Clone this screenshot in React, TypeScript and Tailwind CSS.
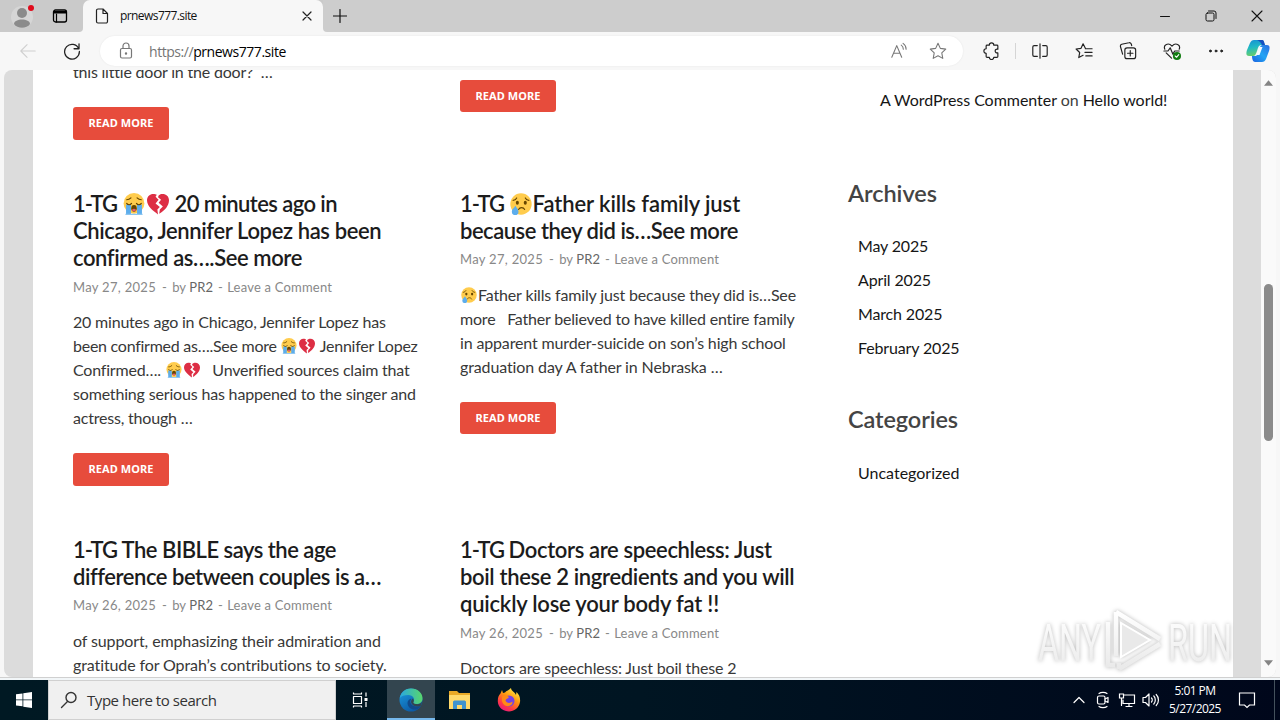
import type { ReactNode } from "react";

const Crying = ({ className = "" }: { className?: string }) => (
  <svg viewBox="0 0 36 36" className={"inline-block " + className}>
    <circle cx="18" cy="17" r="17" fill="#ffcc4d" />
    <path d="M5 19h8v16H5zM23 19h8v16h-8z" fill="#5dadec" />
    <path d="M4 34h28v2H4z" fill="#8cc5f0" />
    <path d="M6 17c2 3 6 3 8 0M22 17c2 3 6 3 8 0M6 11c3 0 5-1 7-3M30 11c-3 0-5-1-7-3" fill="none" stroke="#664500" strokeWidth="1.9" strokeLinecap="round" />
    <ellipse cx="18" cy="25" rx="4.5" ry="5.5" fill="#664500" />
    <path d="M14.5 28c2-3 5-3 7 0-1 3-6 3-7 0z" fill="#e75a70" />
  </svg>
);

const Broken = ({ className = "" }: { className?: string }) => (
  <svg viewBox="0 0 36 36" className={"inline-block " + className}>
    <path d="M13.6 2C7 0 0 4 0 12c0 9 9 17 18 23l-1-8 4-4-7-6 5-6-5-5 2-3c-.7-.5-1.500-.8-2.400-1z" fill="#dd2e44" />
    <path d="M36 12c0-8-7-12-14-10l-3 2-1 3 5 4-4 5 7 6-5 5-1 7c9-5 16-13 16-22z" fill="#dd2e44" />
  </svg>
);

const Tear = ({ className = "" }: { className?: string }) => (
  <svg viewBox="0 0 36 36" className={"inline-block " + className}>
    <circle cx="18" cy="18" r="17.500" fill="#ffcc4d" />
    <ellipse cx="12" cy="16" rx="2.500" ry="3.300" fill="#664500" />
    <ellipse cx="25" cy="16" rx="2.500" ry="3.300" fill="#664500" />
    <path d="M5 12c3 0 5-2 6-4M31 12c-3 0-5-2-6-4M14 27c2-4 8-4 10 0" fill="none" stroke="#664500" strokeWidth="1.800" strokeLinecap="round" />
    <path d="M9 21c-3 4-6 6-6 9.500A5.500 5.500 0 0 0 14 31c0-4-3-6-5-10z" fill="#5dadec" />
  </svg>
);

const big = "w-[22px] h-[22px] mx-[1px] align-[-3px]";
const small = "w-[16px] h-[16px] mx-[1px] align-[-2px]";

const Tag = () => <span className="tracking-[-1px]">1-TG </span>;

const Title = ({ lines }: { lines: ReactNode[] }) => (
  <h2 className="text-[22px] leading-[27px] font-semibold text-[#1c1c1c]">
    {lines.map((l, i) => (
      <span key={i} className="block whitespace-pre">{l}</span>
    ))}
  </h2>
);

const Meta = ({ date, className }: { date: string; className: string }) => (
  <div className={"flex h-[39px] text-[13px] leading-[20px] tracking-[0.3px] whitespace-pre text-[#888] " + className}>
    <span>{date}</span>
    <span className="mr-[5px] ml-[6px]">-</span>
    <span className="tracking-[0.1px]">by <span className="text-[#666]">PR2</span></span>
    <span className="mr-[4px] ml-[5px]">-</span>
    <span className="tracking-[0.2px]">Leave a Comment</span>
  </div>
);

const Body = ({ lines, className }: { lines: ReactNode[]; className: string }) => (
  <p className={"text-[16px] leading-[24px] text-[#383838] " + className}>
    {lines.map((l, i) => (
      <span key={i} className="block whitespace-pre">{l}</span>
    ))}
  </p>
);

const ReadMore = ({ className = "h-[32px]" }: { className?: string }) => (
  <div className={"flex w-[96px] items-center justify-center rounded-[3px] bg-[#e74c3c] font-['Noto_Sans',sans-serif] text-[11px] font-bold tracking-[0.1px] text-white " + className}>
    READ MORE
  </div>
);

const Icon = ({ children, className = "", vb = "0 0 20 20" }: { children: ReactNode; className?: string; vb?: string }) => (
  <svg viewBox={vb} fill="none" stroke="currentColor" strokeWidth="1.2" strokeLinecap="round" strokeLinejoin="round" className={"block shrink-0 " + className}>
    {children}
  </svg>
);

function TabStrip() {
  return (
    <div className="flex h-[32px] bg-[#f7f7f7]">
      <div className="flex w-[83px] items-center rounded-br-[4px] bg-[#cacaca] pl-[11px]">
        <svg viewBox="0 0 24 28" className="h-[28px] w-[24px]">
          <circle cx="11" cy="15" r="11" fill="#d6d6d6" />
          <circle cx="11" cy="11" r="5" fill="#8b8b8b" />
          <path d="M3 22c0-6 16-6 16 0-3 5-13 5-16 0z" fill="#8b8b8b" />
          <circle cx="20" cy="6" r="3" fill="#e00b1c" />
        </svg>
        <Icon vb="0 0 16 16" className="ml-[17px] h-[16px] w-[16px] text-black">
          <rect x="1.500" y="2" width="13" height="12" rx="2" strokeWidth="1.300" />
          <path d="M2 3.500h12v1.500H2z" fill="currentColor" />
          <path d="M4.500 6v8" />
        </Icon>
      </div>
      <div className="w-[240px] bg-[#cacaca]">
        <div className="flex h-[32px] w-[240px] items-center rounded-t-[7px] bg-[#f7f7f7] pl-[12px]">
          <Icon vb="0 0 14 16" className="h-[16px] w-[14px] text-[#222]">
            <path d="M1.500 2.500a1.500 1.500 0 0 1 1.500-1.500h5l4.500 4.500v8a1.500 1.500 0 0 1-1.500 1.500H3a1.500 1.500 0 0 1-1.500-1.500zM8 1v4.500h4.500" />
          </Icon>
          <span className="ml-[11px] w-[100px] text-[12px] tracking-[-0.58px] text-[#111]">prnews777.site</span>
          <Icon vb="0 0 10 10" className="ml-[82px] h-[10px] w-[10px] text-[#222]"><path d="M1 1l8 8M9 1l-8 8" /></Icon>
        </div>
      </div>
      <div className="flex flex-1 items-center rounded-bl-[4px] bg-[#cdcdcd] pl-[10px]">
        <Icon vb="0 0 14 14" className="h-[14px] w-[14px] text-[#111]"><path d="M7 .5v13M.5 7h13" /></Icon>
        <div className="ml-auto flex items-center text-[#111]">
          <Icon vb="0 0 12 12" className="h-[12px] w-[12px]"><path d="M1.500 6.500h9" strokeWidth="1" /></Icon>
          <Icon vb="0 0 12 12" className="ml-[34px] h-[12px] w-[12px]"><rect x="1" y="3" width="8" height="8" rx="1.500" strokeWidth="1" /><path d="M3.500 1H9a2 2 0 0 1 2 2v5.500" strokeWidth="1" /></Icon>
          <Icon vb="0 0 12 12" className="mr-[17px] ml-[34px] h-[12px] w-[12px]"><path d="M1 1l10 10M11 1L1 11" strokeWidth="1.100" /></Icon>
        </div>
      </div>
    </div>
  );
}

function Toolbar() {
  return (
    <div className="flex h-[38px] items-center bg-[#f7f7f7] text-[#222]">
      <Icon className="ml-[19px] h-[18px] w-[18px] text-[#cfcfcf]"><path d="M18 10H2M9 3l-7 7 7 7" /></Icon>
      <Icon className="ml-[26px] h-[18px] w-[18px]"><path d="M17.500 7.500A8.200 8.200 0 1 0 18.200 10.500M17.800 2V7.500h-5.500" strokeWidth="1.400" /></Icon>
      <div className="ml-[19px] flex h-[30px] w-[863px] items-center rounded-full bg-white pl-[18px] shadow-[0_0_2px_rgba(0,0,0,0.08)]">
        <Icon vb="0 0 16 18" className="h-[18px] w-[16px] text-[#777]">
          <rect x="2.500" y="6.500" width="11" height="9.500" rx="1.500" />
          <path d="M5 6.500V4a3 3 0 0 1 6 0v2.500" />
          <circle cx="8" cy="11.500" r=".6" fill="currentColor" />
        </Icon>
        <span className="ml-[15px] text-[14px] tracking-[-0.45px] text-black"><span className="text-[#757575]">https://</span>prnews777.site</span>
        <Icon className="ml-auto h-[18px] w-[18px] text-[#777]"><path d="M2 17L7.500 4 13 17M4 12.500h7M12.500 3.500c1.500 1 2.300 2.500 2.300 4.500M14.500 1.500c2.300 1.500 3.400 3.500 3.400 6.500" /></Icon>
        <Icon className="mr-[16px] ml-[21px] h-[18px] w-[18px] text-[#777]"><path d="M10 1.500l2.600 5.600 6 .8-4.400 4.200 1.100 6.100L10 15.200l-5.300 3 1.100-6.100L1.400 7.900l6-.8z" /></Icon>
      </div>
      <Icon className="ml-[20px] h-[18px] w-[18px]"><path d="M7 3.500a2.500 2.500 0 0 1 5 0h3.500a1 1 0 0 1 1 1V8c-4-1-4 5 0 4v4a1 1 0 0 1-1 1H12a2.500 2.500 0 0 1-5 0H4.500a1 1 0 0 1-1-1v-3.500a2.500 2.500 0 0 1 0-5v-3a1 1 0 0 1 1-1z" strokeWidth="1.300" /></Icon>
      <div className="ml-[14px] h-[16px] w-px bg-[#d5d5d5]" />
      <Icon className="ml-[15px] h-[18px] w-[18px]"><path d="M10 2v16M7 4H3.500A1.500 1.500 0 0 0 2 5.500v9A1.500 1.500 0 0 0 3.500 16H7M13 4h3.500A1.500 1.500 0 0 1 18 5.500v9a1.500 1.500 0 0 1-1.500 1.500H13" strokeWidth="1.300" /></Icon>
      <Icon className="ml-[26px] h-[18px] w-[18px]"><path d="M11.500 7L9 2 6.700 7l-5.500.8 4 3.900-1 5.600 4.800-2.500M11.500 7.500H19M11 11.500h8M12 15.500h7" strokeWidth="1.300" /></Icon>
      <Icon className="ml-[26px] h-[18px] w-[18px]"><rect x="6.500" y="6.500" width="12" height="12" rx="2.500" strokeWidth="1.300" /><path d="M12.500 9.500v6M9.500 12.500h6M4 13.500L1.600 5A2.200 2.200 0 0 1 3 2.500l8-1.700A2.200 2.200 0 0 1 13.700 2.500l.4 1.500" strokeWidth="1.300" /></Icon>
      <Icon className="ml-[26px] h-[18px] w-[18px]"><path d="M2 8C0 3 6 0 10 4.500 14 0 20 3 18 8M1 10h4.500L8 6.500l3 7L13 10h5M3.500 12l6 6" strokeWidth="1.300" /><circle cx="15.500" cy="15.500" r="4.500" fill="#107c10" stroke="none" /><path d="M13.500 15.500l1.500 1.500 2.500-3" stroke="white" /></Icon>
      <Icon className="ml-[27px] h-[16px] w-[16px]"><circle cx="3" cy="10" r="1.200" fill="currentColor" /><circle cx="10" cy="10" r="1.200" fill="currentColor" /><circle cx="17" cy="10" r="1.200" fill="currentColor" /></Icon>
      <svg viewBox="0 0 24 24" className="ml-[22px] h-[24px] w-[24px]">
        <defs>
          <linearGradient id="ca" x1="0" y1="0" x2=".2" y2="1"><stop stopColor="#168ed5" /><stop offset=".5" stopColor="#20b9c4" /><stop offset="1" stopColor="#65ce6e" /></linearGradient>
          <linearGradient id="cb" x1="1" y1="0" x2="0" y2="1"><stop stopColor="#2b6ce0" /><stop offset=".5" stopColor="#22a4f4" /><stop offset="1" stopColor="#1b63e0" /></linearGradient>
        </defs>
        <path d="M8 1h8c2 0 2 3 3 5h-4c-2 0-3 2-4 6-1 3-2 5-4 5H3c-3 0-3-3-2-6L4 4c1-2 2-3 4-3z" fill="url(#ca)" />
        <path d="M16 23H9c-2 0-3-3-3-6h3c2 0 3-2 4-6s2-5 4-5h4c3 0 3 3 2 6l-3 8c-1 2-2 3-4 3z" fill="url(#cb)" />
        <path d="M11 1h5c2 0 2 2 3 5h-3c-1-2-2-4-5-5z" fill="#164fc0" />
        <path d="M13.500 8h3l-3 8h-3z" fill="#f4fbff" />
      </svg>
    </div>
  );
}

function Sidebar() {
  return (
    <aside className="w-[385px] text-[16px] tracking-[-0.15px] text-[#161616]">
      <div className="mt-[18px] ml-[32px] h-[24px] leading-[24px] tracking-[-0.04px] whitespace-nowrap">
        A WordPress Commenter <span className="text-[#404040]">on</span> Hello world!
      </div>
      <h3 className="mt-[66px] text-[23.5px] leading-[30px] font-semibold tracking-[-0.05px] text-[#444]">Archives</h3>
      <ul className="mt-[21px] ml-[10px] leading-[34px]">
        <li>May 2025</li>
        <li>April 2025</li>
        <li>March 2025</li>
        <li>February 2025</li>
      </ul>
      <h3 className="mt-[39px] text-[23.5px] leading-[30px] font-semibold tracking-[-0.1px] text-[#444]">Categories</h3>
      <div className="mt-[22px] ml-[10px] leading-[34px] tracking-normal">Uncategorized</div>
    </aside>
  );
}

function Page() {
  return (
    <div className="mx-[4px] flex h-[607px] overflow-hidden rounded-[8px] bg-[#dcdcdc] font-['Lato',sans-serif]">
      <main className="ml-[29px] flex h-[607px] w-[1200px] overflow-hidden bg-white pl-[40px]">
        <section className="w-[387px] shrink-0">
          <div className="flex h-[120px] flex-col">
            <div className="-mt-[10px] h-[24px] shrink-0 text-[16px] leading-[24px] tracking-[-0.2px] whitespace-pre text-[#383838]">this little door in the door?&nbsp;&nbsp;…</div>
            <ReadMore className="mt-[23px] h-[33px]" />
          </div>
          <article className="h-[346px]">
            <Title lines={[
              <><Tag /><Crying className={big} /><Broken className={big} /><span className="tracking-[-0.58px]"> 20 minutes ago in</span></>,
              <span className="tracking-[-0.38px]">Chicago, Jennifer Lopez has been</span>,
              <span className="tracking-[-0.41px]">confirmed as….See more</span>,
            ]} />
            <Meta date="May 27, 2025" className="pt-[6px]" />
            <Body className="tracking-[-0.2px]" lines={["20 minutes ago in Chicago, Jennifer Lopez has", <span className="tracking-[-0.26px]">been confirmed as….See more <Crying className={small} /><Broken className={small} /> Jennifer Lopez</span>, <>Confirmed…. <Crying className={small} /><Broken className={small} /><span className="tracking-[-0.22px]">&nbsp;&nbsp; Unverified sources claim that</span></>, <span className="tracking-[-0.17px]">something serious has happened to the singer and</span>, "actress, though …"]} />
            <ReadMore className="mt-[23px] h-[33px]" />
          </article>
          <article>
            <Title lines={[
              <><Tag /><span className="tracking-[-0.5px]">The BIBLE says the age</span></>,
              <span className="tracking-[-0.46px]">difference between couples is a…</span>,
            ]} />
            <Meta date="May 26, 2025" className="pt-[5px]" />
            <Body className="tracking-[-0.11px]" lines={["of support, emphasizing their admiration and", "gratitude for Oprah’s contributions to society."]} />
          </article>
        </section>
        <section className="w-[388px] shrink-0">
          <div className="h-[120px] pt-[10px]"><ReadMore /></div>
          <article className="h-[346px]">
            <Title lines={[
              <><Tag /><Tear className={big} /><span className="tracking-[-0.08px]">Father kills family just</span></>,
              <span className="tracking-[-0.49px]">because they did is…See more</span>,
            ]} />
            <Meta date="May 27, 2025" className="pt-[5px]" />
            <Body className="tracking-[-0.15px]" lines={[<><Tear className={small} />Father kills family just because they did is…See</>, <span className="tracking-[-0.19px]">more&nbsp;&nbsp; Father believed to have killed entire family</span>, "in apparent murder-suicide on son’s high school", <span className="tracking-[-0.12px]">graduation day A father in Nebraska …</span>]} />
            <ReadMore className="mt-[23px] h-[32px]" />
          </article>
          <article>
            <Title lines={[
              <><Tag /><span className="tracking-[-0.37px]">Doctors are speechless: Just</span></>,
              <span className="tracking-[-0.35px]">boil these 2 ingredients and you will</span>,
              <span className="tracking-[-0.22px]">quickly lose your body fat !!</span>,
            ]} />
            <Meta date="May 26, 2025" className="pt-[6px]" />
            <Body className="tracking-[-0.17px]" lines={["Doctors are speechless: Just boil these 2"]} />
          </article>
        </section>
        <Sidebar />
      </main>
      <div className="ml-auto flex w-[15px] flex-col items-center bg-[#fafafa]">
        <svg viewBox="0 0 10 6" className="mt-[10px] mr-px h-[6px] w-[9px]"><path d="M5 0l5 6H0z" fill="#858585" /></svg>
        <div className="mt-[198px] h-[157px] w-[9px] rounded-full bg-[#8b8b8b]" />
        <svg viewBox="0 0 10 6" className="mt-auto mr-px mb-[11px] h-[6px] w-[9px]"><path d="M0 0h10L5 6z" fill="#858585" /></svg>
      </div>
    </div>
  );
}

function Watermark() {
  return (
    <svg viewBox="0 0 204 66" className="absolute top-[606px] left-[1036px] h-[66px] w-[204px] drop-shadow-[0_0_2px_rgba(0,0,0,0.28)]">
      <defs>
        <linearGradient id="wm" x1="0" y1="0" x2="0" y2="1"><stop stopColor="#ffffff" /><stop offset="1" stopColor="#e9e9e9" /></linearGradient>
      </defs>
      <g fill="url(#wm)" fontFamily="Roboto, sans-serif" fontWeight="400" fontSize="52">
        <text x="2" y="55" textLength="63" lengthAdjust="spacingAndGlyphs">ANY</text>
        <text x="132" y="55" textLength="64" lengthAdjust="spacingAndGlyphs">RUN</text>
      </g>
      <path d="M80 6v44M72 16v43h7M80 6l44 27M83 63l41-25M83 63v-6" fill="none" stroke="url(#wm)" strokeWidth="4.500" />
      <path d="M85 17v34l29-17z" fill="#e9e9e9" stroke="#fff" strokeWidth="2" />
    </svg>
  );
}

function Taskbar() {
  return (
    <div className="flex h-[40px] items-center bg-linear-to-r from-[#001923] via-[#001522] to-[#00071b] text-white">
      <svg viewBox="0 0 16 16" className="ml-[16px] h-[16px] w-[16px]" fill="white"><path d="M0 2.300l6.500-.9v6H0zM7.300 1.300L16 0v7.400H7.300zM0 8.300h6.500v6L0 13.400zM7.300 8.300H16V16l-8.700-1.200z" /></svg>
      <div className="ml-[16px] flex h-[40px] w-[288px] items-center border border-[#d0d0d0] bg-[#f0f0f0] pl-[11px] text-[#333]">
        <Icon vb="0 0 18 18" className="h-[18px] w-[18px]"><circle cx="11" cy="6.500" r="5" strokeWidth="1.400" /><path d="M7.500 10.500L1.500 16.500" strokeWidth="1.400" /></Icon>
        <span className="ml-[9px] text-[15px] tracking-[-0.45px]">Type here to search</span>
      </div>
      <Icon vb="0 0 18 18" className="ml-[15px] h-[18px] w-[18px]"><path d="M2.500 5.500h8v7h-8zM2.500 1.500V3h8V1.500M2.500 16.500V15h8v1.500M15 1.500v4M15 11v5" strokeLinecap="butt" /><path d="M13.500 7h3v3h-3z" fill="white" stroke="none" /></Icon>
      <div className="ml-[18px] flex h-[40px] w-[48px] items-center justify-center border-b-2 border-[#76b9ed] bg-[#33454f]">
        <svg viewBox="0 0 24 24" className="mt-[1px] h-[24px] w-[24px]">
          <defs>
            <linearGradient id="ea" x1="0" x2="1"><stop stopColor="#2aa8e0" /><stop offset="1" stopColor="#58d66c" /></linearGradient>
            <linearGradient id="eb" x1="0" y1="0" x2=".6" y2="1"><stop stopColor="#1b9de2" /><stop offset="1" stopColor="#0c59a4" /></linearGradient>
          </defs>
          <circle cx="12" cy="12" r="11.500" fill="url(#eb)" />
          <path d="M.8 10C2 3.500 7 .5 12 .5c7 0 12 5 11.500 10.500-.3 4-4 5.500-7 5-2-.4-2.700-1-2.200-2 2-3 0-7-5-7-4 0-7 1-8.500 3z" fill="url(#ea)" />
          <path d="M8.500 15c0 4 4 7 8 6.500 2-.2 4-1.500 5.300-3.500-3 1.300-8 1-10-2.500-1-2-.2-4 .7-5-2 .3-4 2-4 4.500z" fill="#114a8b" />
          <path d="M14.500 14c-.5 1 .2 1.600 2.200 2 3 .5 5.500-.5 6.500-2.500l-1.500 4.500c-3 1-8 .5-9.500-3-.5-2 .5-4 1.500-4.500 1 .8 1.500 2 .8 3.500z" fill="#33454f" />
        </svg>
      </div>
      <svg viewBox="0 0 22 20" className="ml-[14px] h-[20px] w-[22px]">
        <path d="M0 1h8l2 2h11v16H0z" fill="#e9a926" />
        <path d="M0 5h21v14H0z" fill="#ffd96b" />
        <path d="M4 19v-7c0-1 1-1.500 2-1.500h9c1 0 2 .5 2 1.500v7h-4v-4H8v4z" fill="#3f93cf" />
      </svg>
      <svg viewBox="0 0 24 24" className="ml-[26px] h-[24px] w-[24px]">
        <defs><linearGradient id="fx" x1=".8" y1="0" x2=".2" y2="1"><stop stopColor="#fff44f" /><stop offset=".4" stopColor="#ff980e" /><stop offset=".75" stopColor="#ff3647" /><stop offset="1" stopColor="#e31587" /></linearGradient></defs>
        <path d="M5 2l1 3 2-.5C10 2 11 3 14 0c0 3 4 4 5 7l.5-3c3 3 4 6 3.500 10-1 6-6 9.500-11 9.500S1 20 .8 13.500C.7 9 2 7 3.500 5.500z" fill="url(#fx)" />
        <circle cx="12" cy="13" r="5.500" fill="#7542e5" />
        <path d="M5.500 8c3-1.500 5-.5 6.500 1.500-1 1-3 1-3.500 3 1 3 5 3 7 1 .5 4-4 6-7.500 4S4.500 11 5.500 8z" fill="#ff8a16" />
      </svg>
      <div className="ml-auto flex items-center">
        <Icon vb="0 0 12 12" className="mr-[-1px] ml-px h-[12px] w-[12px]"><path d="M1 8.500l5-5 5 5" /></Icon>
        <Icon vb="0 0 14 18" className="ml-[12px] h-[18px] w-[14px]"><rect x="1.500" y="5" width="7.500" height="8" rx="1.500" /><path d="M9 8l3-1.500v5L9 10M3 2.500c2-1.500 6-1.500 8 0M3 15.500c2 1.500 6 1.500 8 0" /></Icon>
        <Icon vb="0 0 18 16" className="ml-[8px] h-[16px] w-[18px]"><path d="M6 3h10.500v8.500H5V8M11 11.500V14M8 14.500h6M1.500 2h4v4h-4zM3.500 6v7.500" strokeLinejoin="miter" /></Icon>
        <Icon vb="0 0 18 16" className="ml-[6px] h-[16px] w-[18px]"><path d="M1 5.500h2.500L7 2v12l-3.500-3.500H1zM9.500 6c1 1 1 3 0 4M11.800 4c2 2 2 6 0 8M14.200 2.500c3 3 3 8 0 11" /></Icon>
        <div className="ml-[4px] w-[62px] text-center text-[12px] leading-[18px] tracking-[-0.55px] whitespace-nowrap"><div>5:01 PM</div><div>5/27/2025</div></div>
        <Icon vb="0 0 18 18" className="ml-[12px] h-[18px] w-[18px]"><path d="M1.500 2h15v12h-5L9 16.500 6.500 14h-5z" strokeLinejoin="miter" /></Icon>
        <div className="ml-[18px] h-[40px] w-px bg-[#44515c]" />
        <div className="w-[5px]" />
      </div>
    </div>
  );
}

export default function App() {
  return (
    <div className="relative flex h-[720px] w-[1280px] flex-col overflow-hidden bg-[#f7f7f7] font-['Open_Sans',sans-serif]">
      <TabStrip />
      <Toolbar />
      <Page />
      <div className="h-[3px] shrink-0 border-t border-[#d0d0d0] bg-[#f2f6f8]" />
      <Taskbar />
      <Watermark />
    </div>
  );
}
